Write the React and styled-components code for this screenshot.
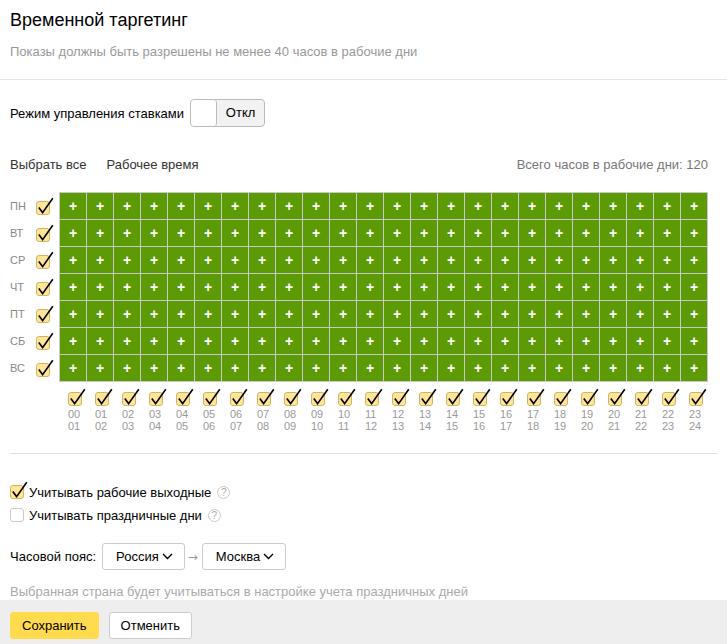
import React, { useState } from 'react';
import styled, { createGlobalStyle } from 'styled-components';

const GlobalStyle = createGlobalStyle`
  * { box-sizing: border-box; }
  body {
    margin: 0;
    font-family: "Liberation Sans", Arial, sans-serif;
    font-size: 13px;
    color: #000;
    background: #fff;
  }
`;

const DAYS = ['ПН', 'ВТ', 'СР', 'ЧТ', 'ПТ', 'СБ', 'ВС'];
const HOURS = Array.from({ length: 24 }, (_, i) => i);
const pad = (n) => String(n).padStart(2, '0');

const Page = styled.div`
  width: 727px;
  min-height: 644px;
  display: flex;
  flex-direction: column;
`;

const Header = styled.header`
  padding: 9px 10px 19px;
  border-bottom: 1px solid #e5e5e5;
`;

const Title = styled.h1`
  margin: 0;
  font-size: 18px;
  line-height: 22px;
  font-weight: normal;
`;

const Subtitle = styled.p`
  margin: 13px 0 0;
  line-height: 16px;
  color: #999;
`;

const Content = styled.main`
  flex: 1;
  padding: 0 10px;
`;

const ModeRow = styled.div`
  display: flex;
  align-items: center;
  gap: 6px;
  height: 28px;
  margin-top: 19px;
`;

const Toggle = styled.button`
  display: flex;
  height: 28px;
  padding: 0;
  border: 1px solid #bbb;
  border-radius: 4px;
  background: #f2f2f2;
  font: inherit;
  color: #000;
  overflow: hidden;
  cursor: pointer;
`;

const Knob = styled.span`
  width: 26px;
  height: 100%;
  background: #fff;
  border-right: 1px solid #bbb;
  border-radius: 3px;
`;

const ToggleText = styled.span`
  width: 47px;
  line-height: 26px;
  text-align: center;
`;

const Toolbar = styled.div`
  display: flex;
  align-items: center;
  margin-top: 30px;
  line-height: 16px;
`;

const LinkButton = styled.button`
  padding: 0;
  margin-right: 20px;
  border: 0;
  background: none;
  font: inherit;
  color: #333;
  cursor: pointer;
`;

const Total = styled.span`
  margin-left: auto;
  margin-right: 9px;
  color: #777;
`;

const Schedule = styled.div`
  display: flex;
  margin-top: 19px;
`;

const DayColumn = styled.div`
  display: grid;
  grid-auto-rows: 26px;
  row-gap: 1px;
  padding: 1px 0;
  width: 49px;
`;

const DayHead = styled.div`
  display: flex;
  align-items: center;
  cursor: pointer;
`;

const DayLabel = styled.span`
  width: 26px;
  font-size: 11px;
  color: #888;
`;

const Table = styled.div`
  display: grid;
  grid-template-columns: repeat(24, 26px);
  grid-auto-rows: 26px;
  gap: 1px;
  padding: 1px;
  background: #c9c9c9;
`;

const Cell = styled.button`
  padding: 0;
  border: 0;
  background: ${(p) => (p.$on ? '#5d9b06' : '#fff')};
  color: #fff;
  font: bold 14px/26px "Liberation Sans", Arial, sans-serif;
  cursor: pointer;
`;

const HoursRow = styled.div`
  display: flex;
  margin-left: 49px;
  margin-top: 6px;
`;

const HourCol = styled.div`
  width: 27px;
  padding-left: 9px;
  display: flex;
  flex-direction: column;
  align-items: flex-start;
  cursor: pointer;
`;

const HourLabel = styled.span`
  margin-top: 2px;
  font-size: 11px;
  line-height: 12px;
  color: #999;
`;

const Divider = styled.hr`
  margin: 21px 0 0;
  border: 0;
  border-top: 1px solid #e0e0e0;
`;

const Options = styled.div`
  display: flex;
  flex-direction: column;
  gap: 3px;
  margin-top: 28px;
`;

const Option = styled.label`
  display: flex;
  align-items: center;
  height: 20px;
  cursor: pointer;
`;

const CheckSlot = styled.span`
  display: flex;
  align-items: flex-end;
  width: 19px;
  height: 18px;
  margin-top: -4px;
`;

const EmptyBox = styled.span`
  width: 14px;
  height: 14px;
  border: 1px solid #c8c8c8;
  border-radius: 3px;
  background: #fff;
`;

const Help = styled.span`
  width: 13px;
  height: 13px;
  margin-left: 6px;
  border: 1px solid #c8c8c8;
  border-radius: 50%;
  font-size: 10px;
  line-height: 11px;
  text-align: center;
  color: #aaa;
`;

const Timezone = styled.div`
  display: flex;
  align-items: center;
  height: 27px;
  margin-top: 18px;
`;

const Select = styled.button`
  display: flex;
  align-items: center;
  gap: 3px;
  height: 27px;
  padding: 0 11px 0 13px;
  margin-left: ${(p) => p.$offset || 0}px;
  border: 1px solid #ccc;
  border-radius: 3px;
  background: #fff;
  font: inherit;
  color: #000;
  cursor: pointer;
`;

const Arrow = styled.span`
  margin: 0 4px 0 3px;
  font-family: "DejaVu Sans", sans-serif;
  font-size: 12px;
  color: #999;
`;

const Note = styled.p`
  margin: 14px 0 0;
  line-height: 16px;
  color: #aaa;
`;

const Footer = styled.footer`
  display: flex;
  gap: 10px;
  padding: 12px 10px 5px;
  background: #eee;
`;

const Button = styled.button`
  height: 27px;
  padding: 0 11px;
  border: 1px solid ${(p) => (p.$primary ? '#ffdb4d' : '#ccc')};
  border-radius: 3px;
  background: ${(p) => (p.$primary ? '#ffdb4d' : '#fff')};
  font: inherit;
  color: #000;
  cursor: pointer;
`;

const Tick = ({ checked = true }) =>
  checked ? (
    <svg width="18" height="18" viewBox="0 0 18 18">
      <rect x="0.5" y="4.5" width="13" height="13" rx="2.5" fill="#ffe597" stroke="#d2b461" />
      <path d="M2.8 10.6 L6.6 15.6 L16.8 1.2" fill="none" stroke="#000" strokeWidth="1.6" />
    </svg>
  ) : (
    <EmptyBox />
  );

const Chevron = () => (
  <svg width="11" height="7" viewBox="0 0 11 7">
    <path d="M1 1 L5.5 5.5 L10 1" fill="none" stroke="#000" strokeWidth="1.4" />
  </svg>
);

const App = () => {
  const [grid, setGrid] = useState(() => DAYS.map(() => HOURS.map(() => true)));
  const [workWeekends, setWorkWeekends] = useState(true);
  const [holidays, setHolidays] = useState(false);

  const toggleCell = (d, h) =>
    setGrid((g) => g.map((row, i) => (i === d ? row.map((v, j) => (j === h ? !v : v)) : row)));
  const toggleDay = (d) =>
    setGrid((g) => {
      const all = g[d].every(Boolean);
      return g.map((row, i) => (i === d ? row.map(() => !all) : row));
    });
  const toggleHour = (h) =>
    setGrid((g) => {
      const all = g.every((row) => row[h]);
      return g.map((row) => row.map((v, j) => (j === h ? !all : v)));
    });

  const total = grid.slice(0, 5).reduce((s, row) => s + row.filter(Boolean).length, 0);

  return (
    <>
      <GlobalStyle />
      <Page>
        <Header>
          <Title>Временной таргетинг</Title>
          <Subtitle>Показы должны быть разрешены не менее 40 часов в рабочие дни</Subtitle>
        </Header>
        <Content>
          <ModeRow>
            Режим управления ставками
            <Toggle>
              <Knob />
              <ToggleText>Откл</ToggleText>
            </Toggle>
          </ModeRow>

          <Toolbar>
            <LinkButton onClick={() => setGrid(DAYS.map(() => HOURS.map(() => true)))}>Выбрать все</LinkButton>
            <LinkButton>Рабочее время</LinkButton>
            <Total>Всего часов в рабочие дни: {total}</Total>
          </Toolbar>

          <Schedule>
            <DayColumn>
              {DAYS.map((day, d) => (
                <DayHead key={day} onClick={() => toggleDay(d)}>
                  <DayLabel>{day}</DayLabel>
                  <Tick checked={grid[d].every(Boolean)} />
                </DayHead>
              ))}
            </DayColumn>
            <Table>
              {grid.map((row, d) =>
                row.map((on, h) => (
                  <Cell key={`${d}-${h}`} $on={on} onClick={() => toggleCell(d, h)}>
                    {on ? '+' : ''}
                  </Cell>
                ))
              )}
            </Table>
          </Schedule>

          <HoursRow>
            {HOURS.map((h) => (
              <HourCol key={h} onClick={() => toggleHour(h)}>
                <Tick checked={grid.every((row) => row[h])} />
                <HourLabel>
                  {pad(h)}
                  <br />
                  {pad(h + 1)}
                </HourLabel>
              </HourCol>
            ))}
          </HoursRow>

          <Divider />

          <Options>
            <Option onClick={() => setWorkWeekends((v) => !v)}>
              <CheckSlot>
                <Tick checked={workWeekends} />
              </CheckSlot>
              Учитывать рабочие выходные
              <Help>?</Help>
            </Option>
            <Option onClick={() => setHolidays((v) => !v)}>
              <CheckSlot>
                <Tick checked={holidays} />
              </CheckSlot>
              Учитывать праздничные дни
              <Help>?</Help>
            </Option>
          </Options>

          <Timezone>
            Часовой пояс:
            <Select $offset={6}>
              Россия <Chevron />
            </Select>
            <Arrow>→</Arrow>
            <Select>
              Москва <Chevron />
            </Select>
          </Timezone>

          <Note>Выбранная страна будет учитываться в настройке учета праздничных дней</Note>
        </Content>
        <Footer>
          <Button $primary>Сохранить</Button>
          <Button>Отменить</Button>
        </Footer>
      </Page>
    </>
  );
};

export default App;
